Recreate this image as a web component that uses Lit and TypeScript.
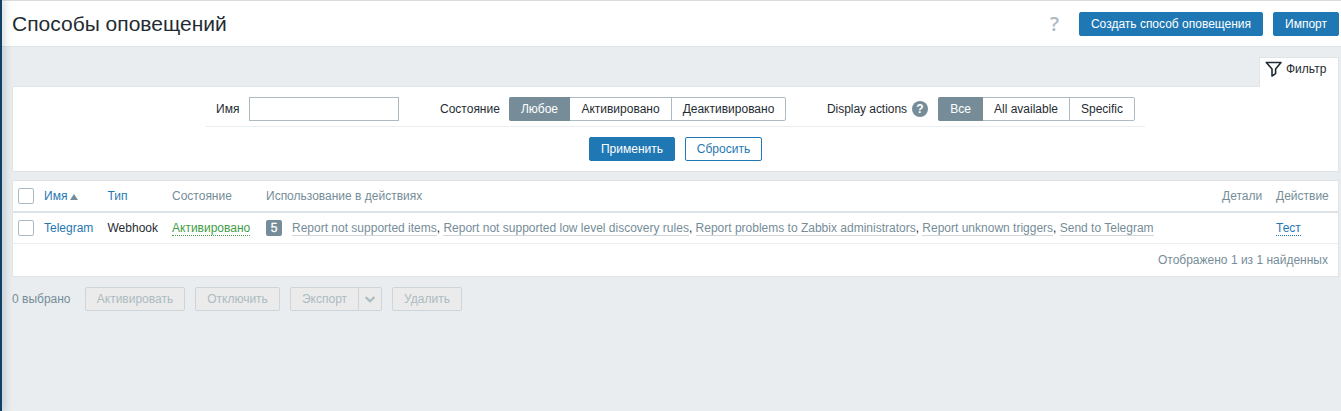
import { LitElement, html, css } from 'lit';
import { customElement } from 'lit/decorators.js';

const ACTIONS = [
  'Report not supported items',
  'Report not supported low level discovery rules',
  'Report problems to Zabbix administrators',
  'Report unknown triggers',
  'Send to Telegram',
];

@customElement('app-root')
export class AppRoot extends LitElement {
  static styles = css`
    :host {
      display: flex;
      width: 1341px;
      height: 411px;
      overflow: hidden;
      background: #e9edf0;
      color: #1f2c33;
      font: 12px/14px "Liberation Sans", Arial, sans-serif;
      white-space: nowrap;
    }
    * { box-sizing: border-box; }
    .rail { width: 2px; flex: none; background: #0e4166; box-shadow: 0 0 8px 1px rgba(0, 30, 50, 0.32); z-index: 1; }
    .page { flex: 1; min-width: 0; border-top: 1px solid #dbdcdd; }
    header { display: flex; align-items: center; height: 46px; padding: 0 2px 0 10px; background: #fff; border-bottom: 1px solid #dfe4e7; }
    h1 { margin: 0; flex: 1; font-size: 21px; line-height: 24px; font-weight: 400; }
    .help { width: 10px; margin-right: 19px; font: 600 20px/24px "Open Sans", "Liberation Sans", sans-serif; color: #acbbc2; }
    .btn { height: 24px; padding: 0; border: 1px solid #1f78b4; border-radius: 2px; background: #1f78b4; color: #fff; font: inherit; line-height: 22px; text-align: center; flex: none; }
    .create { width: 184px; margin-right: 10px; }
    .import { width: 66px; }
    .content { padding: 10px 2px 0 10px; }
    .tab { display: flex; align-items: center; width: 80px; height: 30px; margin: 0 0 -1px auto; padding: 0 0 7px 5px; gap: 4px; background: #fff; border: 1px solid #dfe4e7; border-bottom: 0; position: relative; }
    .tab svg { display: block; flex: none; }
    .filter { height: 86px; padding: 10px 193px 0; border: 1px solid #dfe4e7; background: #fff; }
    .fields { display: grid; grid-template-columns: 224px 387px 1fr; height: 30px; padding: 0 10px; border-bottom: 1px solid #ebeef0; }
    .field { display: flex; align-items: center; height: 24px; }
    .field label { margin-right: 10px; }
    .name label { width: 23px; }
    .state label { width: 59px; }
    .show label { width: 80px; margin-right: 5px; letter-spacing: -0.05px; }
    .name input { width: 150px; height: 24px; padding: 0; border: 1px solid #acbbc2; border-radius: 0; background: #fff; }
    .info { width: 16px; height: 16px; margin-right: 10px; border-radius: 50%; background: #768d99; color: #fff; font: bold 12px/16px "Liberation Sans", sans-serif; text-align: center; }
    .seg { display: flex; height: 24px; border: 1px solid #acbbc2; border-radius: 2px; line-height: 22px; text-align: center; }
    .seg span + span + span { border-left: 1px solid #acbbc2; }
    .seg .on { margin: -1px 0 -1px -1px; line-height: 24px; background: #768d99; color: #fff; border-radius: 2px 0 0 2px; }
    .w61 { width: 61px; } .w101 { width: 101px; } .w114 { width: 114px; }
    .w45 { width: 45px; } .w86 { width: 86px; } .w65 { width: 65px; }
    .submit { display: flex; justify-content: center; gap: 10px; padding-top: 10px; }
    .apply { width: 86px; }
    .reset { width: 77px; background: #fff; color: #1f78b4; }
    .table { height: 97px; margin-top: 8px; border: 1px solid #dfe4e7; background: #fff; }
    .row { display: grid; grid-template-columns: 26px 63.5px 64.5px 94px 1fr 54px 62px; align-items: center; padding-left: 5px; height: 31px; border-bottom: 1px solid #ebeef0; }
    .head { height: 32px; border-bottom: 2px solid #dce2e5; color: #768d99; }
    .check { width: 16px; height: 16px; border: 1px solid #acbbc2; border-radius: 2px; background: #fff; }
    .link { color: #1f78b4; }
    .sort { display: inline-block; margin-left: 3px; border: 4px solid transparent; border-top: 0; border-bottom: 6px solid #768d99; }
    .on-state { color: #429e47; border-bottom: 1px dotted #429e47; }
    .test { color: #1f78b4; border-bottom: 1px dotted #1f78b4; }
    .usage { display: flex; align-items: center; }
    .count { width: 16px; height: 16px; margin-right: 10px; background: #768d99; border-radius: 2px; color: #fff; text-align: center; font-weight: 400; line-height: 16px; flex: none; -webkit-text-stroke: 0.3px #fff; }
    .action { color: #768d99; border-bottom: 1px solid #d0d6d9; }
    .total { height: 32px; padding: 9px 10px 0; text-align: right; color: #768d99; }
    .bulk { display: flex; align-items: center; margin-top: 10px; color: #768d99; }
    .selected { width: 73px; }
    .off { margin-right: 10px; background: #ebebeb; border-color: #ccd5d9; color: #acbbc2; }
    .b100 { width: 100px; } .b85 { width: 85px; } .b70 { width: 70px; }
    .export { width: 69px; margin-right: 0; border-radius: 2px 0 0 2px; }
    .more { display: flex; align-items: center; justify-content: center; width: 24px; margin-left: -1px; border-radius: 0 2px 2px 0; }
  `;

  render() {
    return html`
      <div class="rail"></div>
      <div class="page">
        <header>
          <h1>Способы оповещений</h1>
          <span class="help">?</span>
          <button class="btn create">Создать способ оповещения</button>
          <button class="btn import">Импорт</button>
        </header>
        <div class="content">
          <div class="tab">
            <svg width="17" height="16" viewBox="0 0 17 16" fill="none" stroke="#1f2c33" stroke-width="1.6" stroke-linejoin="round">
              <path d="M1.3 1.5H16L10.6 8V12.6L7 15V8Z" />
            </svg>
            <span>Фильтр</span>
          </div>
          <div class="filter">
            <div class="fields">
              <div class="field name"><label>Имя</label><input type="text" /></div>
              <div class="field state">
                <label>Состояние</label>
                <div class="seg"><span class="on w61">Любое</span><span class="w101">Активировано</span><span class="w114">Деактивировано</span></div>
              </div>
              <div class="field show">
                <label>Display actions</label><span class="info">?</span>
                <div class="seg"><span class="on w45">Все</span><span class="w86">All available</span><span class="w65">Specific</span></div>
              </div>
            </div>
            <div class="submit">
              <button class="btn apply">Применить</button>
              <button class="btn reset">Сбросить</button>
            </div>
          </div>
          <div class="table">
            <div class="row head">
              <span class="check"></span>
              <span><span class="link">Имя</span><span class="sort"></span></span>
              <span class="link">Тип</span>
              <span>Состояние</span>
              <span>Использование в действиях</span>
              <span>Детали</span>
              <span>Действие</span>
            </div>
            <div class="row">
              <span class="check"></span>
              <span class="link">Telegram</span>
              <span>Webhook</span>
              <span><span class="on-state">Активировано</span></span>
              <div class="usage">
                <span class="count">5</span>
                <span>${ACTIONS.map((a, i) => html`${i ? ', ' : ''}<span class="action">${a}</span>`)}</span>
              </div>
              <span></span>
              <span><span class="test">Тест</span></span>
            </div>
            <div class="total">Отображено 1 из 1 найденных</div>
          </div>
          <div class="bulk">
            <span class="selected">0 выбрано</span>
            <button class="btn off b100" disabled>Активировать</button>
            <button class="btn off b85" disabled>Отключить</button>
            <button class="btn off export" disabled>Экспорт</button>
            <button class="btn off more" disabled>
              <svg width="10" height="7" viewBox="0 0 10 7" fill="none" stroke="#acbbc2" stroke-width="2.2"><path d="M.6 1L5 5.2L9.4 1" /></svg>
            </button>
            <button class="btn off b70" disabled>Удалить</button>
          </div>
        </div>
      </div>
    `;
  }
}
